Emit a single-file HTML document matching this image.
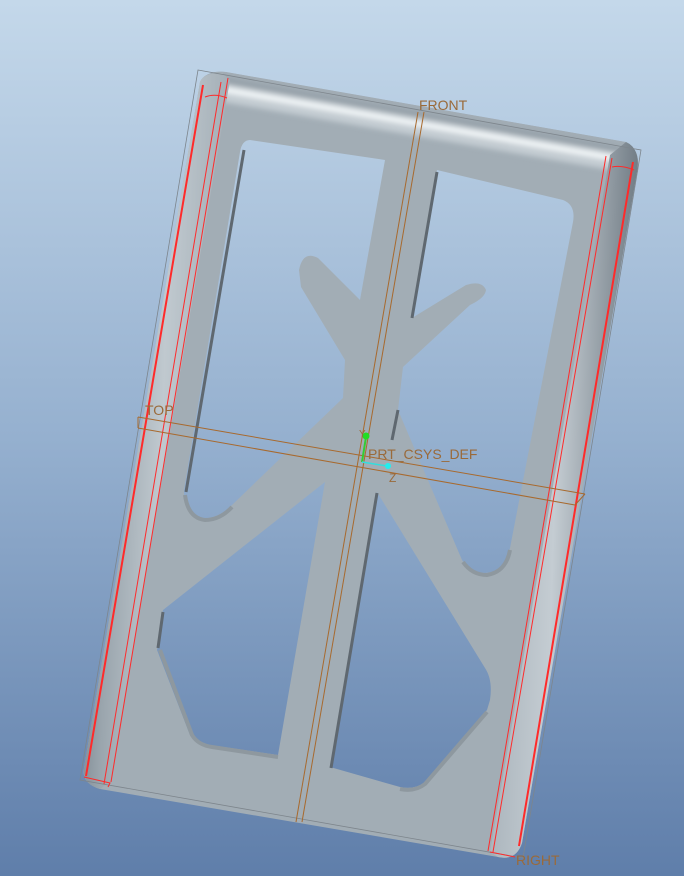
<!DOCTYPE html>
<html><head><meta charset="utf-8"><style>
html,body{margin:0;padding:0;width:684px;height:876px;overflow:hidden}
svg{display:block}
text{font-family:"Liberation Sans",sans-serif;font-size:14px;fill:#9a6a3a}
</style></head><body>
<svg width="684" height="876" viewBox="0 0 684 876" xmlns="http://www.w3.org/2000/svg">
<defs>
<linearGradient id="bg" gradientUnits="userSpaceOnUse" x1="0" y1="0" x2="0" y2="876">
<stop offset="0" stop-color="#c4d8ea"/><stop offset="0.5" stop-color="#95b0cf"/><stop offset="1" stop-color="#5f7eaa"/>
</linearGradient>
<linearGradient id="lr" x1="0" y1="0" x2="1" y2="0.15">
<stop offset="0" stop-color="#6f7a83"/><stop offset="0.25" stop-color="#9aa5ad"/><stop offset="0.6" stop-color="#c0c9cf"/><stop offset="1" stop-color="#a2adb5"/>
</linearGradient>
<linearGradient id="rr" x1="0" y1="0" x2="1" y2="0.15">
<stop offset="0" stop-color="#a2adb5"/><stop offset="0.5" stop-color="#c4ccd2"/><stop offset="1" stop-color="#6f7a83"/>
</linearGradient>
<filter id="bl" x="-5%" y="-50%" width="110%" height="200%"><feGaussianBlur stdDeviation="3"/></filter>
</defs>
<rect width="684" height="876" fill="url(#bg)"/>
<path d="M200,82 Q205,71 225,72 L625,142 Q642,150 637,172 L522,843 Q516,861 498,857 L100,789 Q81,783 84,768 Z" fill="#a2adb5"/>
<!-- top rail -->
<path d="M203,80 Q208,70 226,72 L626,142 Q640,148 638,172 L612,180 L220,110 L198,100 Z" fill="#a2adb5"/>
<g filter="url(#bl)">
<path d="M215,79 L620,150" stroke="#8f9aa3" stroke-width="4"/>
<path d="M215,88 L620,159" stroke="#f2f6f8" stroke-width="8"/>
<path d="M215,97 L620,168" stroke="#c9d1d7" stroke-width="6"/>
</g>
<path d="M200,82 Q203,73 222,73 L230,80 L110,782 L100,789 Q82,784 84,768 Z" fill="url(#lr)"/>
<path d="M610,155 L626,142 Q641,149 637,172 L522,843 Q516,861 498,857 L490,852 Z" fill="url(#rr)"/>
<g fill="url(#bg)">
<path d="M250,140 L385,160 L360,300 L318,258 Q303,250 299,270 L301,287 L345,360 L343,398 L232,505 Q215,522 197,517 Q183,510 184,490 L240,152 Q242,140 250,140 Z"/>
<path d="M437,170 L563,200 Q576,205 573,222 L510,548 Q505,572 485,573 Q470,572 462,560 L398,410 L403,367 L470,305 Q485,298 486,290 Q482,280 466,285 L412,318 Z"/>
<path d="M325,482 L163,610 L157,650 L190,735 Q196,743 210,745 L278,755 Z"/>
<path d="M377,492 L485,668 Q493,680 490,700 L487,710 L425,782 Q415,790 400,787 L330,767 Z"/>
</g>
<g stroke="#5f6870" stroke-width="3" fill="none">
<path d="M244,150 L186,492"/>
<path d="M437,172 L412,318"/>
<path d="M398,410 L392,440"/>
<path d="M331,768 L377,493"/>
<path d="M163,612 L158,648"/>
</g>
<g stroke="#8e989f" stroke-width="4" fill="none">
<path d="M160,650 L192,735 Q198,745 212,747 L278,757"/>
<path d="M487,712 L425,784 Q415,792 400,789"/>
<path d="M185,495 Q188,518 205,520 Q220,520 232,507"/>
<path d="M463,562 Q472,575 487,575 Q506,572 510,550"/>
</g>
<g stroke="#7d858c" stroke-width="0.8" fill="none">
<path d="M198,70 L641,150 L523,858 L80,780 Z"/>
</g>
<g stroke="#ff2a2a" fill="none">
<path d="M203,85 L86,776" stroke-width="2"/>
<path d="M221,82 L104,784" stroke-width="1"/>
<path d="M228,78 L111,782" stroke-width="1"/>
<path d="M633,162 L519,846" stroke-width="2"/>
<path d="M612,158 L493,852" stroke-width="1"/>
<path d="M606,156 L488,851" stroke-width="1"/>
<path d="M205,97 Q215,93 227,98 M612,167 Q622,165 634,170 M84,777 L110,783 L108,787 M490,852 L515,857" stroke-width="1"/>
</g>
<g stroke="#a8692d" fill="none" stroke-width="1">
<path d="M418,112 L296,822"/>
<path d="M424,112 L302,822"/>
<path d="M138,417 L585,494"/>
<path d="M138,428 L575,505"/>
<path d="M138,417 L138,428 M585,494 L575,505"/>
</g>
<path d="M362,462 L366,437" stroke="#33cc33" stroke-width="2"/>
<circle cx="366" cy="436" r="3.5" fill="#22dd22"/>
<path d="M362,462 L387,466" stroke="#33dddd" stroke-width="1.5"/>
<circle cx="388" cy="466" r="3" fill="#22eeee"/>
<text x="419" y="110">FRONT</text>
<text x="145" y="415">TOP</text>
<text x="368" y="459">PRT_CSYS_DEF</text>
<text x="389" y="482" style="font-size:12px">Z</text>
<text x="359" y="437" style="font-size:10px">Y</text>
<text x="516" y="865">RIGHT</text>
</svg>
</body></html>
